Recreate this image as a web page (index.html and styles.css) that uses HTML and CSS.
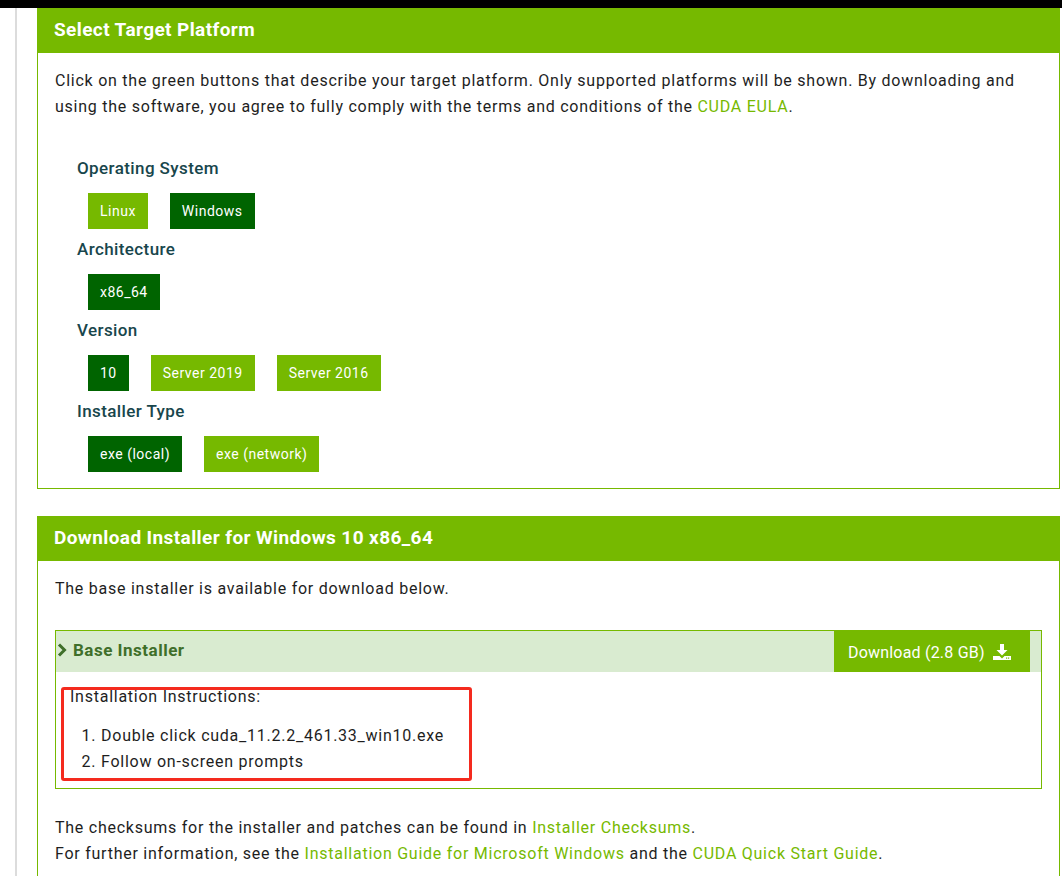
FILE: index.html
```html
<!DOCTYPE html>
<html lang="en">
<head>
  <meta charset="UTF-8">
  <meta name="viewport" content="width=device-width, initial-scale=1.0">
  <title>CUDA Toolkit Downloads</title>
  <link rel="stylesheet" href="styles.css">
</head>
<body>
  <div class="topbar"></div>
  <div class="page">
    <div class="rail"></div>
    <div class="content">
      <div class="panel">
        <div class="panel-head">Select Target Platform</div>
        <div class="panel-body">
          <p class="intro">Click on the green buttons that describe your target platform. Only supported platforms will be shown. By downloading and using the software, you agree to fully comply with the terms and conditions of the <a href="#">CUDA EULA</a>.</p>
          <div class="selector">
            <div class="label">Operating System</div>
            <div class="options">
              <span class="opt">Linux</span>
              <span class="opt active">Windows</span>
            </div>
            <div class="label">Architecture</div>
            <div class="options">
              <span class="opt active">x86_64</span>
            </div>
            <div class="label">Version</div>
            <div class="options">
              <span class="opt active">10</span>
              <span class="opt">Server 2019</span>
              <span class="opt">Server 2016</span>
            </div>
            <div class="label">Installer Type</div>
            <div class="options">
              <span class="opt active">exe (local)</span>
              <span class="opt">exe (network)</span>
            </div>
          </div>
        </div>
      </div>

      <div class="panel open">
        <div class="panel-head">Download Installer for Windows 10 x86_64</div>
        <div class="panel-body">
          <p class="intro">The base installer is available for download below.</p>
          <div class="installer">
            <div class="installer-head">
              <div class="installer-title">
                <svg class="chevron" width="10" height="14" viewBox="0 0 10 14"><polyline points="2,1.5 7.5,7 2,12.5" fill="none" stroke="#3f6f2a" stroke-width="3"/></svg>
                Base Installer
              </div>
              <a class="download" href="#">Download (2.8 GB)
                <svg width="18" height="16" viewBox="0 0 18 16"><path d="M7 0h4v6h3.5L9 11.5 3.5 6H7z" fill="#fff"/><path d="M0 12h6.5L9 14.5 11.5 12H18v4H0z" fill="#fff"/><rect x="13" y="13.5" width="1.2" height="1.2" fill="#76b900"/><rect x="15" y="13.5" width="1.2" height="1.2" fill="#76b900"/></svg>
              </a>
            </div>
            <div class="installer-body">
              <div class="steps-title">Installation Instructions:</div>
              <ol class="steps">
                <li>Double click cuda_11.2.2_461.33_win10.exe</li>
                <li>Follow on-screen prompts</li>
              </ol>
              <div class="mark"></div>
            </div>
          </div>
          <p class="notes">The checksums for the installer and patches can be found in <a href="#">Installer Checksums</a>.<br>For further information, see the <a href="#">Installation Guide for Microsoft Windows</a> and the <a href="#">CUDA Quick Start Guide</a>.</p>
        </div>
      </div>
    </div>
  </div>
</body>
</html>
```

FILE: styles.css
```css
body {
  margin: 0;
  background: #fff;
  font-family: Roboto, "Liberation Sans", sans-serif;
  color: #1e1e1e;
  font-size: 16px;
  letter-spacing: 0.75px;
}
a {
  color: #76b900;
  text-decoration: none;
}
.topbar {
  height: 8px;
  background: #000;
}
.page {
  display: flex;
  height: 868px;
  overflow: hidden;
}
.rail {
  width: 2px;
  margin-left: 15px;
  background: #dcdcdc;
}
.content {
  flex: 1;
  margin-left: 20px;
  margin-right: 2px;
}
.panel {
  border: 1px solid #76b900;
  border-top: none;
}
.panel.open {
  margin-top: 27px;
}
.panel-head {
  background: #76b900;
  color: #fff;
  font-weight: bold;
  font-size: 19px;
  letter-spacing: 0.4px;
  height: 45px;
  line-height: 44px;
  padding-left: 17px;
  margin-left: -1px;
  margin-right: -1px;
}
.panel-body {
  padding: 15px 17px 16px 17px;
}
.intro {
  margin: 0;
  line-height: 26px;
}
.selector {
  margin-top: 36px;
  padding-left: 22px;
}
.label {
  color: #18464c;
  font-size: 17px;
  font-weight: 500;
  letter-spacing: 0.4px;
  line-height: 24px;
}
.options {
  display: flex;
  gap: 22px;
  padding-left: 11px;
  margin: 13px 0 8px 0;
}
.options:last-child {
  margin-bottom: 0;
}
.opt {
  background: #76b900;
  color: #fff;
  font-size: 14px;
  letter-spacing: 0.5px;
  height: 36px;
  line-height: 36px;
  padding: 0 12px;
}
.opt.active {
  background: #006400;
}
.installer {
  margin-top: 28px;
  border: 1px solid #76b900;
}
.installer-head {
  display: flex;
  justify-content: space-between;
  background: #d9ebd0;
  height: 41px;
  padding-right: 11px;
}
.installer-title {
  display: flex;
  align-items: center;
  gap: 6px;
  padding: 0 0 3px 1px;
  color: #3f6f2a;
  font-weight: bold;
  font-size: 17px;
  letter-spacing: 0.5px;
}
.download {
  display: flex;
  align-items: center;
  gap: 8px;
  box-sizing: border-box;
  width: 196px;
  white-space: nowrap;
  background: #76b900;
  color: #fff;
  padding: 1px 12px 0 14px;
  font-size: 16px;
  letter-spacing: 0.2px;
}
.installer-body {
  position: relative;
  padding: 14px 14px 13px 14px;
}
.steps-title {
  line-height: 22px;
}
.steps {
  margin: 15px 0 0 0;
  padding-left: 31px;
  line-height: 26px;
}
.mark {
  position: absolute;
  left: 5px;
  top: 15px;
  width: 405px;
  height: 88px;
  border: 3px solid #f42a1e;
  border-radius: 3px;
}
.notes {
  margin: 26px 0 0 0;
  line-height: 26px;
}
```
